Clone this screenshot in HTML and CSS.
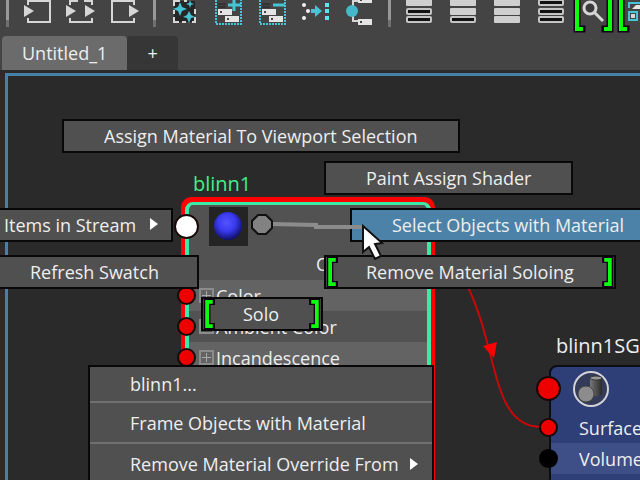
FILE: index.html
```html
<!DOCTYPE html>
<html lang="en">
  <head>
    <meta charset="UTF-8" />
    <title>Node Editor</title>
    <link rel="stylesheet" href="styles.css">
  </head>
  <body>
    <svg class="defs" aria-hidden="true">
      <symbol id="bracket" viewBox="0 0 12 32" overflow="visible">
        <path d="M9 3H4V29H9" fill="none" stroke="#120016" stroke-width="7" stroke-linecap="square" />
        <path d="M10 3H4V29H10" fill="none" stroke="#0bff0b" stroke-width="4" />
      </symbol>
      <symbol id="bar-full" viewBox="0 0 26 7">
        <rect width="26" height="7" rx="1" fill="#cfcfcf" />
      </symbol>
      <symbol id="bar-line" viewBox="0 0 26 7">
        <rect width="26" height="7" rx="2" fill="#c4c4c4" />
        <rect x="2" y="2" width="22" height="3" fill="#111" />
      </symbol>
      <symbol id="tag" viewBox="0 0 14 6">
        <rect width="14" height="6" fill="#e4e4e4" />
        <rect x="2" y="2" width="2" height="2" fill="#444" />
      </symbol>
    </svg>

    <header class="toolbar">
      <span class="separator"></span>
      <button class="tool" aria-label="Input connections">
        <svg viewBox="0 0 32 32">
          <path d="M7 5V1H29V22H7V18" fill="none" stroke="#d6d6d6" stroke-width="2" />
          <path d="M3 5L13 11L3 17Z" fill="#d6d6d6" />
        </svg>
      </button>
      <button class="tool" aria-label="Input and output connections">
        <svg viewBox="0 0 32 32">
          <path d="M5 5V1H13M19 1H27V5M27 18V22H5V18" fill="none" stroke="#d6d6d6" stroke-width="2" />
          <path d="M1 5L11 11L1 17ZM20 5L30 11L20 17Z" fill="#d6d6d6" />
        </svg>
      </button>
      <button class="tool" aria-label="Output connections">
        <svg viewBox="0 0 32 32">
          <path d="M25 5V1H3V22H25V18" fill="none" stroke="#d6d6d6" stroke-width="2" />
          <path d="M20 5L30 11L20 17Z" fill="#d6d6d6" />
        </svg>
      </button>
      <span class="separator"></span>
      <button class="tool" aria-label="Clear graph">
        <svg viewBox="0 0 32 32">
          <path d="M6 1H27V22H6Z" fill="#262626" />
          <path d="M6 6V1H12M16 1H19M27 9V14M6 10V14M6 17V22H11M14 22H18M24 22H27V17" fill="none" stroke="#d6d6d6" stroke-width="2" />
          <path d="M12 2L14 7L19 9L14 11L12 16L10 11L5 9L10 7ZM22 0L23 3L26 4L23 5L22 8L21 5L18 4L21 3ZM21 11L23 15L27 17L23 18L21 23L19 18L15 17L19 15Z" fill="#44c4d4" />
        </svg>
      </button>
      <button class="tool" aria-label="Add selected">
        <svg viewBox="0 0 32 32">
          <path d="M4 0V24H29V0" fill="none" stroke="#44c4d4" stroke-width="2" stroke-dasharray="2 1" />
          <path d="M6 4H14M6 7H14" stroke="#222" />
          <use href="#tag" x="6" y="9" width="14" height="6" />
          <use href="#tag" x="13" y="16" width="14" height="6" />
          <path d="M22 -2V11M16 5H29" stroke="#44c4d4" stroke-width="3" />
        </svg>
      </button>
      <button class="tool" aria-label="Remove selected">
        <svg viewBox="0 0 32 32">
          <path d="M4 0V24H29V0" fill="none" stroke="#44c4d4" stroke-width="2" stroke-dasharray="2 1" />
          <path d="M6 4H14M6 7H14" stroke="#222" />
          <use href="#tag" x="6" y="9" width="14" height="6" />
          <use href="#tag" x="13" y="16" width="14" height="6" />
          <path d="M17 5H29" stroke="#44c4d4" stroke-width="3" />
        </svg>
      </button>
      <button class="tool" aria-label="Rearrange graph">
        <svg viewBox="0 0 32 32">
          <g fill="#f2f2f2">
            <circle cx="4" cy="5" r="2" /><circle cx="8" cy="11" r="2" /><circle cx="4" cy="18" r="2" />
          </g>
          <path d="M11 9H15V5L22 11L15 17V13H11Z" fill="#44c4d4" />
          <g fill="#55e6f2">
            <rect x="25" y="3" width="4" height="4" /><rect x="25" y="9" width="4" height="4" /><rect x="25" y="16" width="4" height="4" />
          </g>
        </svg>
      </button>
      <button class="tool" aria-label="Graph materials">
        <svg viewBox="0 0 32 32">
          <path d="M9 8V1H14M9 12V21H14" fill="none" stroke="#d6d6d6" stroke-width="2" />
          <circle cx="8" cy="11" r="6" fill="#44b8c8" />
          <use href="#tag" x="14" y="-3" width="14" height="6" />
          <use href="#tag" x="14" y="19" width="14" height="6" />
        </svg>
      </button>
      <span class="separator"></span>
      <button class="tool" aria-label="Simple view">
        <svg viewBox="0 0 32 32">
          <use href="#bar-full" x="3" y="-1" width="26" height="7" />
          <use href="#bar-line" x="3" y="8" width="26" height="7" />
          <use href="#bar-line" x="3" y="16" width="26" height="7" />
        </svg>
      </button>
      <button class="tool" aria-label="Connected view">
        <svg viewBox="0 0 32 32">
          <use href="#bar-full" x="3" y="-1" width="26" height="7" />
          <use href="#bar-full" x="3" y="8" width="26" height="7" />
          <use href="#bar-line" x="3" y="16" width="26" height="7" />
        </svg>
      </button>
      <button class="tool" aria-label="Full view">
        <svg viewBox="0 0 32 32">
          <use href="#bar-full" x="3" y="-1" width="26" height="7" />
          <use href="#bar-full" x="3" y="8" width="26" height="7" />
          <use href="#bar-full" x="3" y="16" width="26" height="7" />
        </svg>
      </button>
      <button class="tool" aria-label="Custom view">
        <svg viewBox="0 0 32 32">
          <use href="#bar-line" x="3" y="-1" width="26" height="7" />
          <use href="#bar-line" x="3" y="8" width="26" height="7" />
          <use href="#bar-line" x="3" y="16" width="26" height="7" />
        </svg>
      </button>
      <button class="tool" aria-label="Search">
        <svg viewBox="0 0 32 32">
          <path d="M3 29H-2V-4M26 29H31V-4" fill="none" stroke="#120016" stroke-width="7" stroke-linecap="square" />
          <path d="M4 29H-2V-4M25 29H31V-4" fill="none" stroke="#0bff0b" stroke-width="4" />
          <path d="M15 12L24 21" stroke="#d6d6d6" stroke-width="3" />
          <circle cx="11" cy="8" r="6" fill="#3a3a3a" stroke="#d6d6d6" stroke-width="3" />
        </svg>
      </button>
      <button class="tool" aria-label="Swatches">
        <svg viewBox="0 0 32 32">
          <path d="M3 29H-2V-4" fill="none" stroke="#120016" stroke-width="7" stroke-linecap="square" />
          <path d="M4 29H-2V-4" fill="none" stroke="#0bff0b" stroke-width="4" />
          <path d="M6 8V3H20M6 12H14V20H6Z" fill="none" stroke="#44c4d4" stroke-width="2" />
          <path d="M9 9L13 5H20V9Z" fill="#e4e4e4" />
          <rect x="8" y="14" width="4" height="4" fill="#d6d6d6" />
        </svg>
      </button>
    </header>

    <nav class="tabs">
      <button class="tab active">Untitled_1</button>
      <button class="tab add" aria-label="New tab">+</button>
    </nav>

    <main class="workspace">
      <div class="canvas"></div>

      <svg class="wires" width="640" height="410" aria-hidden="true">
        <path d="M467 215C499 280 491 357 541 357" fill="none" stroke="#c80808" stroke-width="2" />
        <path d="M483 276L497 272L494 288Z" fill="#f00" />
      </svg>

      <section class="node blinn">
        <h2 class="node-title">blinn1</h2>
        <div class="node-frame">
          <div class="node-body">
            <div class="node-head">
              <span class="port large white"></span>
              <svg class="swatch" viewBox="0 0 39 39">
                <defs>
                  <radialGradient id="ball" cx="45%" cy="38%" r="62%">
                    <stop offset="0" stop-color="#5454ff" />
                    <stop offset="0.5" stop-color="#3a3af0" />
                    <stop offset="1" stop-color="#101068" />
                  </radialGradient>
                </defs>
                <rect width="39" height="39" fill="#242424" />
                <circle cx="19" cy="19" r="14" fill="url(#ball)" />
              </svg>
              <span class="out-label">Out Color</span>
            </div>
            <ul class="attributes">
              <li><span class="port red"></span><span class="expand"></span>Color</li>
              <li><span class="port red"></span><span class="expand"></span>Ambient Color</li>
              <li><span class="port red"></span><span class="expand"></span>Incandescence</li>
              <li></li>
              <li></li>
              <li></li>
              <li></li>
            </ul>
          </div>
        </div>
      </section>

      <section class="node shading-group">
        <h2 class="node-title">blinn1SG</h2>
        <div class="sg-body">
          <div class="sg-head">
            <span class="port large red"></span>
            <svg class="sg-icon" viewBox="0 0 38 38">
              <defs>
                <linearGradient id="metal">
                  <stop offset="0" stop-color="#777" />
                  <stop offset="1" stop-color="#2a2a2a" />
                </linearGradient>
              </defs>
              <circle cx="19" cy="19" r="17" fill="#333b58" stroke="#d2d2d8" stroke-width="2" />
              <path d="M18 8V24C18 27 30 27 30 24V8Z" fill="url(#metal)" />
              <ellipse cx="24" cy="8" rx="6" ry="2" fill="#999" stroke="#333" />
              <circle cx="14" cy="24" r="8" fill="#8c8c8c" stroke="#444" />
            </svg>
          </div>
          <ul class="attributes">
            <li><span class="port red"></span>Surface Shader</li>
            <li><span class="port black"></span>Volume Shader</li>
            <li></li>
          </ul>
        </div>
      </section>

      <button class="mark assign">Assign Material To Viewport Selection</button>
      <button class="mark paint">Paint Assign Shader</button>
      <button class="mark select-objects">Select Objects with Material</button>
      <button class="mark items">Items in Stream <span class="arrow"></span></button>
      <button class="mark refresh">Refresh Swatch</button>
      <button class="mark remove">
        <svg class="bracket"><use href="#bracket" /></svg>Remove Material Soloing<svg class="bracket end"><use href="#bracket" /></svg>
      </button>
      <button class="mark solo">
        <svg class="bracket"><use href="#bracket" /></svg>Solo<svg class="bracket end"><use href="#bracket" /></svg>
      </button>

      <div class="menu">
        <button class="menu-item">blinn1...</button>
        <button class="menu-item">Frame Objects with Material</button>
        <button class="menu-item">Remove Material Override From <span class="arrow"></span></button>
      </div>

      <svg class="pointer" viewBox="0 0 130 60" aria-hidden="true">
        <path d="M22 15L66 16V18H114" fill="none" stroke="#8c8c8c" stroke-width="4" />
        <path d="M8 6H16L22 12V19L16 25H8L2 19V12Z" fill="#828282" stroke="#111" stroke-width="2" />
        <path d="M113 17V43L119 38L125 50L131 47L125 35L132 34Z" fill="#fff" stroke="#111" stroke-width="2" />
      </svg>
    </main>
  </body>
</html>
```
FILE: styles.css
```css
* {
  box-sizing: border-box;
}
body {
  margin: 0;
  height: 100vh;
  display: flex;
  flex-direction: column;
  overflow: hidden;
  background: #444;
  color: #eee;
  font-family: "Open Sans", "Noto Sans", sans-serif;
  font-size: 18px;
  line-height: 24px;
}
button {
  font: inherit;
  color: inherit;
  border: none;
  cursor: pointer;
}
ul {
  list-style: none;
  margin: 0;
  padding: 0;
}
.defs {
  position: absolute;
  width: 0;
  height: 0;
}

/* toolbar */
.toolbar {
  display: flex;
  flex: none;
  gap: 12px;
  height: 36px;
  padding-left: 6px;
}
.tool {
  flex: none;
  width: 32px;
  height: 32px;
  padding: 0;
  background: none;
}
.tool svg {
  display: block;
  overflow: visible;
}
.separator {
  flex: none;
  width: 3px;
  height: 27px;
  background: linear-gradient(#999 0 20px, #707070 20px);
}

/* tabs */
.tabs {
  display: flex;
  flex: none;
  height: 34px;
  padding-left: 2px;
}
.tab {
  padding: 0 20px;
  background: #363636;
  border-radius: 4px 4px 0 0;
}
.tab.active {
  background: #6b6b6b;
}

/* canvas */
.workspace {
  position: relative;
  flex: 1;
  display: flex;
  padding: 3px 0 0 5px;
  background: #2d2a2a;
  overflow: hidden;
}
.canvas {
  flex: 1;
  background: #2a2a2a;
  border: solid #4682a8;
  border-width: 3px 0 0 3px;
}
.wires {
  position: absolute;
  top: 0;
  left: 0;
}

/* nodes */
.node {
  position: absolute;
}
.node-title {
  margin: 0;
  font-size: 20px;
  font-weight: 400;
  line-height: 26px;
}
.blinn {
  left: 181px;
  top: 101px;
  width: 254px;
}
.blinn .node-title {
  padding-left: 12px;
  color: #3ff08c;
}
.node-frame {
  padding: 5px 4px;
  background: #f00;
  border-radius: 10px;
}
.node-body {
  border: solid #3ceaa8;
  border-width: 3px 4px;
  border-radius: 8px;
  background: #525252;
}
.node-head {
  position: relative;
  height: 75px;
  padding: 2px 30px 0 20px;
}
.swatch {
  display: block;
  width: 39px;
  height: 39px;
}
.out-label {
  display: block;
  margin-top: 6px;
  text-align: right;
}
.attributes li {
  position: relative;
  display: flex;
  align-items: center;
  gap: 2px;
  height: 31px;
  padding-left: 10px;
  white-space: nowrap;
}
.blinn li:nth-child(odd) {
  background: #636363;
}
.expand {
  width: 15px;
  height: 15px;
  border: 2px solid #8c8c8c;
  background:
    linear-gradient(#aaa, #aaa) center / 9px 1px no-repeat,
    linear-gradient(#aaa, #aaa) center / 1px 9px no-repeat;
}
.port {
  position: absolute;
  left: -12px;
  top: 6px;
  width: 19px;
  height: 19px;
  border: 2px solid #1a0808;
  border-radius: 50%;
}
.port.large {
  left: -15px;
  top: 9px;
  width: 25px;
  height: 25px;
}
.port.red {
  background: #ee0000;
}
.port.white {
  background: #fff;
}
.port.black {
  background: #000;
  border-color: #000;
}

.shading-group {
  left: 549px;
  top: 263px;
  width: 220px;
}
.shading-group .node-title {
  padding-left: 7px;
}
.sg-body {
  margin-top: 6px;
  border: 2px solid #0c0c14;
  border-radius: 8px;
  background: #2e3e76;
}
.sg-head {
  position: relative;
  height: 45px;
  padding: 3px 0 0 21px;
}
.sg-icon {
  display: block;
  width: 38px;
  height: 38px;
}
.sg-body li {
  padding-left: 28px;
}
.sg-body li:nth-child(even) {
  background: #3e4e86;
}

/* marking menu */
.mark {
  position: absolute;
  height: 34px;
  padding: 0 40px;
  border: 2px solid #080808;
  background: #505050;
  line-height: 24px;
  text-align: left;
  white-space: nowrap;
}
.assign {
  left: 62px;
  top: 49px;
  width: 398px;
}
.paint {
  left: 324px;
  top: 91px;
  width: 249px;
}
.select-objects {
  left: 350px;
  top: 138px;
  width: 316px;
  background: #4d82a8;
}
.items {
  left: -38px;
  top: 138px;
  width: 211px;
}
.refresh {
  left: -12px;
  top: 185px;
  width: 211px;
}
.remove {
  left: 324px;
  top: 185px;
  width: 292px;
}
.solo {
  left: 201px;
  top: 227px;
  width: 122px;
}
.bracket {
  position: absolute;
  left: 0;
  top: 0;
  width: 12px;
  height: 30px;
}
.bracket.end {
  left: auto;
  right: 0;
  transform: scaleX(-1);
}
.arrow {
  display: inline-block;
  border: solid transparent;
  border-width: 6px 0 6px 8px;
  border-left-color: #fff;
}
.items .arrow {
  position: absolute;
  right: 13px;
  top: 8px;
}

.menu {
  position: absolute;
  left: 88px;
  top: 295px;
  width: 346px;
  border: 2px solid #080808;
  background: #505050;
}
.menu-item {
  display: flex;
  align-items: center;
  justify-content: space-between;
  width: 100%;
  height: 41px;
  padding: 0 14px 0 40px;
  background: none;
  border-bottom: 2px solid #707070;
  text-align: left;
}
.menu-item:first-child {
  height: 36px;
}
.pointer {
  position: absolute;
  left: 250px;
  top: 139px;
  width: 130px;
  height: 60px;
  overflow: visible;
}
```
